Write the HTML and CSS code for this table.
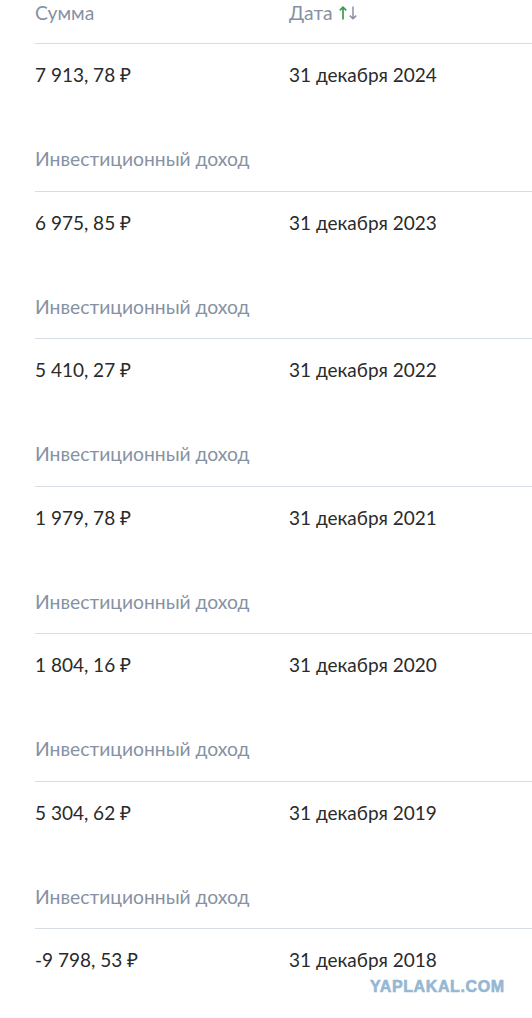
FILE: index.html
```html
<!DOCTYPE html>
<html lang="ru">
<head>
    <meta charset="UTF-8">
    <meta name="viewport" content="width=device-width, initial-scale=1.0">
    <title>Операции</title>
    <link rel="stylesheet" href="styles.css">
</head>
<body>
    <!-- Таблица операций -->
    <div class="ops">
        <div class="ops-head">
            <div class="col-sum">Сумма</div>
            <div class="col-date">Дата
                <span class="sort">
                    <svg class="arr up" width="8" height="14" viewBox="0 0 8 14"><path d="M4 13.5V1.2M0.8 4.4L4 1.2L7.2 4.4" fill="none" stroke="currentColor" stroke-width="1.7"/></svg>
                    <svg class="arr down" width="8" height="14" viewBox="0 0 8 14"><path d="M4 0.5V12.8M0.8 9.6L4 12.8L7.2 9.6" fill="none" stroke="currentColor" stroke-width="1.5"/></svg>
                </span>
            </div>
        </div>

        <div class="op">
            <div class="op-main"><div class="col-sum">7 913, 78 ₽</div><div class="col-date">31 декабря 2024</div></div>
            <div class="op-type">Инвестиционный доход</div>
        </div>
        <div class="op">
            <div class="op-main"><div class="col-sum">6 975, 85 ₽</div><div class="col-date">31 декабря 2023</div></div>
            <div class="op-type">Инвестиционный доход</div>
        </div>
        <div class="op">
            <div class="op-main"><div class="col-sum">5 410, 27 ₽</div><div class="col-date">31 декабря 2022</div></div>
            <div class="op-type">Инвестиционный доход</div>
        </div>
        <div class="op">
            <div class="op-main"><div class="col-sum">1 979, 78 ₽</div><div class="col-date">31 декабря 2021</div></div>
            <div class="op-type">Инвестиционный доход</div>
        </div>
        <div class="op">
            <div class="op-main"><div class="col-sum">1 804, 16 ₽</div><div class="col-date">31 декабря 2020</div></div>
            <div class="op-type">Инвестиционный доход</div>
        </div>
        <div class="op">
            <div class="op-main"><div class="col-sum">5 304, 62 ₽</div><div class="col-date">31 декабря 2019</div></div>
            <div class="op-type">Инвестиционный доход</div>
        </div>
        <div class="op">
            <div class="op-main"><div class="col-sum">-9 798, 53 ₽</div><div class="col-date">31 декабря 2018</div></div>
        </div>
    </div>

    <div class="watermark">YAPLAKAL.COM</div>
</body>
</html>
```

FILE: styles.css
```css
/* Основные стили */
body {
    margin: 0;
    font-family: Lato, "Noto Sans", sans-serif;
    background-color: #fff;
    color: #2a2a2a;
    position: relative;
    height: 1018px;
    overflow: hidden;
}
.ops {
    padding-left: 35px;
}
.ops-head {
    display: flex;
    height: 26px;
    line-height: 26px;
    padding-bottom: 17px;
    font-size: 19.3px;
    color: #8692a3;
}
.col-sum {
    width: 254px;
}
.col-date {
    display: flex;
    align-items: center;
}
.sort {
    display: inline-flex;
    gap: 2px;
    margin-left: 6px;
}
.arr.up {
    color: #3f9a4e;
}
.arr.down {
    color: #8692a3;
}
.op {
    border-top: 1px solid #d6dde4;
    padding-bottom: 12.5px;
}
.op-main {
    display: flex;
    height: 62px;
    line-height: 62px;
    font-size: 19px;
}
.op-type {
    margin-top: 34px;
    height: 38px;
    line-height: 38px;
    font-size: 19.3px;
    color: #8692a3;
}
.watermark {
    position: absolute;
    left: 370px;
    top: 978px;
    font-family: "Liberation Sans", Arial, sans-serif;
    font-weight: bold;
    font-size: 16px;
    letter-spacing: 0.6px;
    -webkit-text-stroke: 0.6px #94b8d4;
    color: #94b8d4;
}
```
